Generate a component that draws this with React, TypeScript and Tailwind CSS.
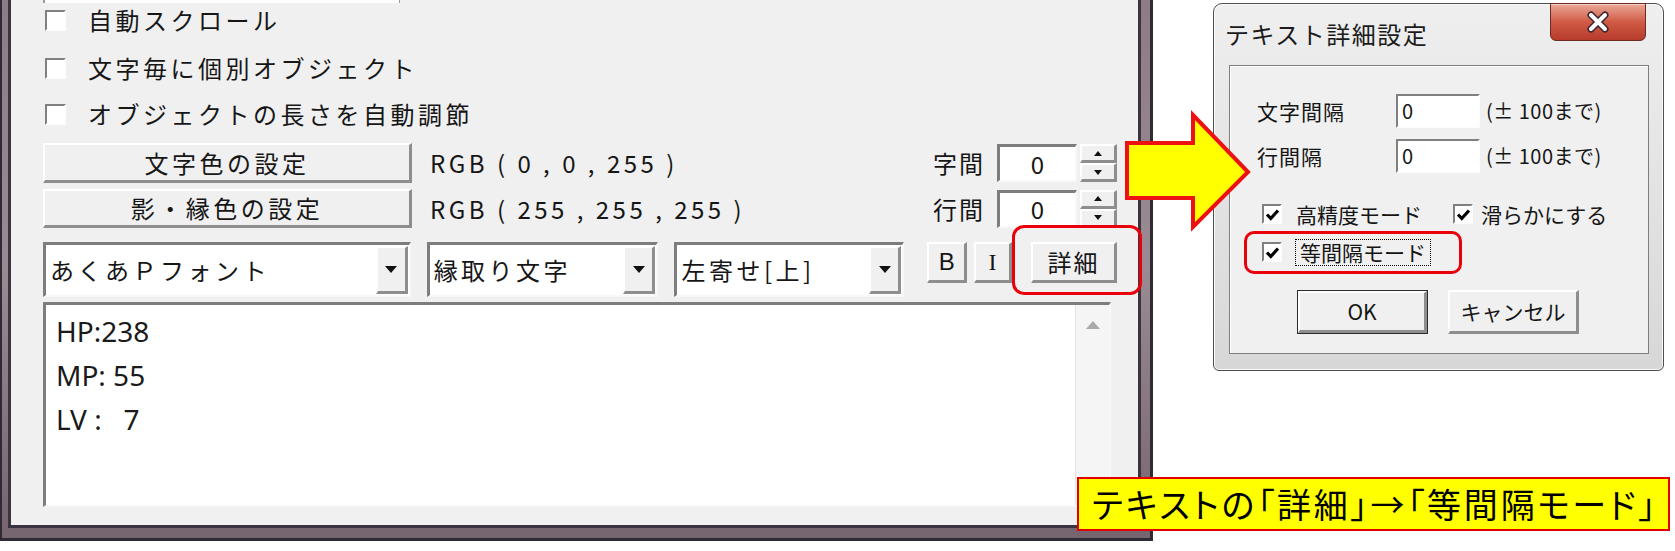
import React from 'react';

const raised =
  'bg-[#f0f0f0] border-t-2 border-l-2 border-t-white border-l-white border-b-[3px] border-r-[3px] border-b-[#8e8e8e] border-r-[#8e8e8e]';
const sunken =
  'bg-white border-t-[3px] border-l-[3px] border-t-[#7d7d7d] border-l-[#7d7d7d] border-b-2 border-r-2 border-b-[#f8f8f8] border-r-[#f8f8f8]';
const sunkenThin =
  'bg-white border-t-2 border-l-2 border-t-[#808080] border-l-[#808080] border-b-2 border-r-2 border-b-[#fdfdfd] border-r-[#fdfdfd]';

function Tri({ down = false, color = '#111', w = 8, h = 5 }: { down?: boolean; color?: string; w?: number; h?: number }) {
  return (
    <svg width={w} height={h} viewBox={`0 0 ${w} ${h}`}>
      <polygon points={down ? `0,0 ${w},0 ${w / 2},${h}` : `0,${h} ${w},${h} ${w / 2},0`} fill={color} />
    </svg>
  );
}

function Check({ checked = false, size = 'w-[21px] h-[21px]' }: { checked?: boolean; size?: string }) {
  return (
    <div className={`${size} shrink-0 ${sunkenThin} flex items-center justify-center`}>
      {checked && (
        <svg width="15" height="13" viewBox="0 0 15 13">
          <path d="M2 6.5 L5.8 10.5 L13 2.5" stroke="#000" strokeWidth="3.2" fill="none" />
        </svg>
      )}
    </div>
  );
}

function CheckRow({ label, className }: { label: string; className: string }) {
  return (
    <div className={`${className} h-[34px] flex items-center`}>
      <div className="ml-[2px]">
        <Check />
      </div>
      <span className="ml-[22px] text-[24px] tracking-[3.5px] leading-none">{label}</span>
    </div>
  );
}

function Spin() {
  return (
    <div className="ml-[3px] w-[37px] h-full flex flex-col">
      <div className={`flex-1 ${raised} flex items-center justify-center`}>
        <Tri />
      </div>
      <div className={`flex-1 ${raised} flex items-center justify-center`}>
        <Tri down />
      </div>
    </div>
  );
}

function Combo({ label, className }: { label: string; className: string }) {
  return (
    <div className={`${className} h-full ${sunken} flex items-stretch`}>
      <div className="flex-1 pl-[4px] flex items-center text-[24px] tracking-[3.5px] leading-none">{label}</div>
      <div className={`w-[32px] my-[1px] mr-[1px] ${raised} flex items-center justify-center`}>
        <Tri down w={12} h={7} />
      </div>
    </div>
  );
}

function MainWindow() {
  return (
    <div className="w-[1153px] h-[541px] shrink-0 border-l-2 border-r-[3px] border-b-[3px] border-[#2f2a33] bg-gradient-to-b from-[#8d7c86] via-[#9a8a92] to-[#76656f] pl-[6px] pr-[9px] pb-[10px]">
      <div className="h-full border-l-[3px] border-r-[3px] border-b-[3px] border-[#3b3440] bg-[#f0f0f0] pl-[32px] pr-[21px] flex flex-col">
        <div className="h-[3px] w-[357px] shrink-0 bg-white border-l-2 border-r border-[#9a9a9a]" />
        <CheckRow className="mt-0" label="自動スクロール" />
        <CheckRow className="mt-[14px]" label="文字毎に個別オブジェクト" />
        <CheckRow className="mt-[12px]" label="オブジェクトの長さを自動調節" />

        <div className="mt-[12px] h-[40px] shrink-0 flex items-center">
          <div className={`w-[369px] h-full ${raised} flex items-center justify-center text-[24px] tracking-[3.5px] leading-none`}>
            文字色の設定
          </div>
          <span className="ml-[18px] text-[24px] tracking-[3.5px] leading-none">RGB ( 0 , 0 , 255 )</span>
          <div className="ml-auto h-[38px] flex items-center">
            <span className="text-[24px] tracking-[2px] leading-none">字間</span>
            <div className={`ml-[12px] w-[80px] h-full ${sunken} flex items-center justify-center text-[24px] leading-none`}>0</div>
            <Spin />
          </div>
        </div>

        <div className="mt-[6px] h-[39px] shrink-0 flex items-center">
          <div className={`w-[369px] h-full ${raised} flex items-center justify-center text-[24px] tracking-[3.5px] leading-none`}>
            影・縁色の設定
          </div>
          <span className="ml-[18px] text-[24px] tracking-[3.5px] leading-none">RGB ( 255 , 255 , 255 )</span>
          <div className="ml-auto h-[38px] flex items-center">
            <span className="text-[24px] tracking-[2px] leading-none">行間</span>
            <div className={`ml-[12px] w-[80px] h-full ${sunken} flex items-center justify-center text-[24px] leading-none`}>0</div>
            <Spin />
          </div>
        </div>

        <div className="mt-[14px] h-[55px] shrink-0 flex items-start">
          <Combo className="w-[368px]" label="あくあＰフォント" />
          <Combo className="ml-[16px] w-[232px]" label="縁取り文字" />
          <Combo className="ml-[16px] w-[230px]" label="左寄せ[上]" />
          <div className={`ml-[23px] w-[40px] h-[41px] ${raised} flex items-center justify-center text-[24px] font-['Liberation_Sans'] leading-none`}>B</div>
          <div className={`ml-[7px] w-[38px] h-[41px] ${raised} flex items-center justify-center text-[24px] font-['Liberation_Serif'] leading-none`}>I</div>
          <div className={`ml-[19px] w-[86px] h-[41px] ${raised} flex items-center justify-center text-[24px] tracking-[2px] leading-none`}>詳細</div>
        </div>

        <div className={`mt-[5px] mr-[6px] h-[205px] shrink-0 ${sunken} flex`}>
          <div className="flex-1 pl-[10px] pt-[4px] font-['Noto_Sans'] text-[28px] leading-[44px] whitespace-pre text-[#1a1a1a]">
            <div>HP:238</div>
            <div>MP: 55</div>
            <div>LV :   7</div>
          </div>
          <div className="w-[34px] bg-[#f5f5f5] border-l border-[#e4e4e4] flex justify-center pt-[16px]">
            <Tri w={14} h={8} color="#a9a9a9" />
          </div>
        </div>
      </div>
    </div>
  );
}

function Dialog() {
  return (
    <div className="ml-[60px] mt-[3px] w-[451px] h-[368px] shrink-0 rounded-t-[9px] rounded-b-[6px] border border-[#4e4e4e] bg-gradient-to-b from-[#efefef] via-[#e3e3e3] to-[#d7d7d7] shadow-[inset_0_0_0_1px_#fbfbfb] flex flex-col">
      <div className="h-[61px] shrink-0 flex items-start">
        <span className="ml-[11px] mt-[16px] text-[24px] tracking-[1.5px] leading-[28px] text-[#1b1b1b]">テキスト詳細設定</span>
        <div className="ml-auto mr-[17px] -mt-px w-[96px] h-[38px] rounded-b-[6px] border border-[#6b2a22] bg-gradient-to-b from-[#e9a898] via-[#cf5a45] to-[#b63b2b] shadow-[inset_0_1px_0_#f6d0c6] flex items-center justify-center">
          <svg width="26" height="22" viewBox="0 0 26 22">
            <path d="M6 4 L20 18 M20 4 L6 18" stroke="#3a2430" strokeWidth="7" strokeLinecap="round" />
            <path d="M6 4 L20 18 M20 4 L6 18" stroke="#fff" strokeWidth="4" strokeLinecap="round" />
          </svg>
        </div>
      </div>
      <div className="ml-[15px] w-[420px] h-[289px] border border-[#7e7e7e] bg-[#f0f0f0] shadow-[inset_1px_1px_0_#fff] flex flex-col text-[21px] leading-none text-[#151515]">
        <div className="mt-[28px] h-[34px] flex items-center">
          <span className="ml-[27px] w-[139px] tracking-[1px]">文字間隔</span>
          <div className={`w-[84px] h-full ${sunkenThin} flex items-center pl-[4px] text-[20px]`}>0</div>
          <span className="ml-[6px] text-[20px] tracking-[0.5px]">(± 100まで)</span>
        </div>
        <div className="mt-[11px] h-[34px] flex items-center">
          <span className="ml-[27px] w-[139px] tracking-[1px]">行間隔</span>
          <div className={`w-[84px] h-full ${sunkenThin} flex items-center pl-[4px] text-[20px]`}>0</div>
          <span className="ml-[6px] text-[20px] tracking-[0.5px]">(± 100まで)</span>
        </div>
        <div className="mt-[26px] h-[30px] flex items-center">
          <div className="ml-[32px] w-[191px] flex items-center">
            <Check checked size="w-[20px] h-[20px]" />
            <span className="ml-[14px]">高精度モード</span>
          </div>
          <Check checked size="w-[20px] h-[20px]" />
          <span className="ml-[8px]">滑らかにする</span>
        </div>
        <div className="mt-[8px] h-[30px] flex items-center">
          <div className="ml-[32px]">
            <Check checked size="w-[20px] h-[20px]" />
          </div>
          <span className="ml-[13px] h-[27px] px-[4px] border border-dotted border-black flex items-center">等間隔モード</span>
        </div>
        <div className="mt-[23px] h-[44px] flex">
          <div className="ml-[67px] w-[131px] h-full border border-[#2b2b2b]">
            <div className={`h-full ${raised} flex items-center justify-center`}>OK</div>
          </div>
          <div className={`ml-[20px] w-[131px] h-full ${raised} flex items-center justify-center`}>キャンセル</div>
        </div>
      </div>
    </div>
  );
}

export default function App() {
  return (
    <div className="relative w-[1675px] h-[551px] overflow-hidden bg-white flex items-start font-['Noto_Sans_CJK_JP',sans-serif] text-[#161616]">
      <MainWindow />
      <Dialog />

      {/* callout arrow */}
      <svg className="absolute left-[1122px] top-[110px]" width="132" height="122" viewBox="0 0 132 122">
        <polygon points="5,33 71,33 71,5 126,62 71,117 71,88 5,88" fill="#ffff00" stroke="#ee1111" strokeWidth="4" />
      </svg>

      {/* highlight boxes */}
      <div className="absolute left-[1012px] top-[225px] w-[130px] h-[70px] rounded-[12px] border-[3px] border-[#e8000b]" />
      <div className="absolute left-[1244px] top-[231px] w-[218px] h-[43px] rounded-[10px] border-[3px] border-[#e8000b]" />

      <div className="absolute left-[1077px] top-[477px] w-[593px] h-[54px] bg-[#ffff00] border-2 border-[#e00000] flex items-center pl-[13px] text-[34px] leading-none text-black whitespace-nowrap [font-feature-settings:'palt'] tracking-[2.8px]">
        テキストの「詳細」→「等間隔モード」
      </div>
    </div>
  );
}
